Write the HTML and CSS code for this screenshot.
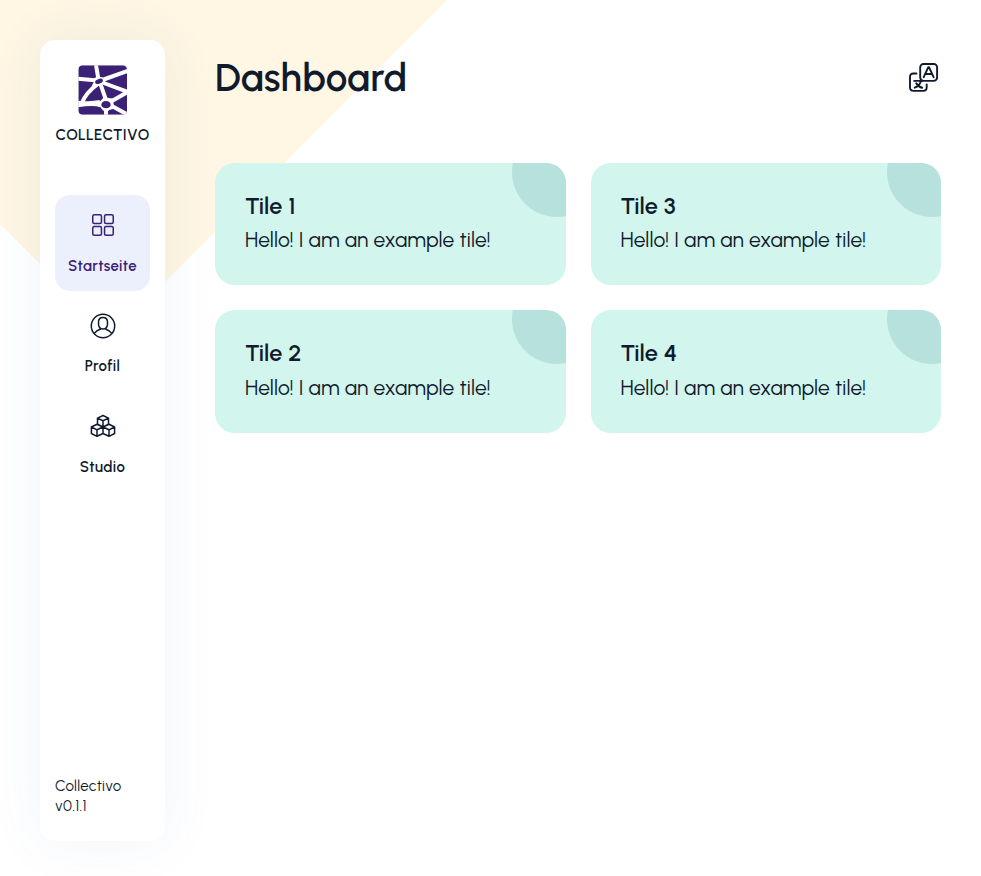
FILE: index.html
```html
<!DOCTYPE html>
<html lang="de">
<head>
<meta charset="utf-8">
<title>Collectivo</title>
<link rel="stylesheet" href="styles.css">
</head>
<body>
<svg class="backdrop" width="447" height="336" viewBox="0 0 447 336" aria-hidden="true"><path fill="#fff6e3" d="M0 0H447L111.500 335.500 0 224Z"/></svg>
<div class="layout">
  <aside class="sidebar">
    <div class="brand">
      <svg class="logo" viewBox="25 25 147 150">
        <defs><clipPath id="logo-shape"><rect x="26" y="26" width="146" height="148" rx="13"/></clipPath></defs>
        <g clip-path="url(#logo-shape)">
          <path fill="#3a2175" d="M26 26h146v148H26z"/>
          <g fill="none" stroke="#fff" stroke-width="12">
            <path d="M79 25 86 66M24 66 76 71M98 70 174 43M102 79 174 106M82 84Q49 108 36 140M93 84 109 130M128 132 174 106M24 138Q65 142 91 136M24 146Q72 138 94 146M109 158V176M128 149 174 174"/>
          </g>
          <path fill="#fff" d="M74 64Q91 55 106 67 111 80 93 86L74 92 66 88Q75 75 74 64ZM86 139 103 122Q120 124 132 126 129 143 137 155L119 160 109 168 98 159Q91 151 86 139Z"/>
          <ellipse cx="88" cy="74" rx="12" ry="7" fill="#3a2175" transform="rotate(-20 88 74)"/>
          <ellipse cx="109" cy="144" rx="14" ry="11" fill="#3a2175"/>
        </g>
      </svg>
      <span class="brand-name">COLLECTIVO</span>
    </div>
    <nav class="menu">
      <a class="item active">
        <svg class="icon" viewBox="0 0 26 26"><g fill="none" stroke="currentColor" stroke-width="1.500"><rect x="2.750" y="2.750" width="8.700" height="8.700" rx="1.500"/><rect x="14.550" y="2.750" width="8.700" height="8.700" rx="1.500"/><rect x="2.750" y="14.550" width="8.700" height="8.700" rx="1.500"/><rect x="14.550" y="14.550" width="8.700" height="8.700" rx="1.500"/></g></svg>
        <span class="start">Startseite</span>
      </a>
      <a class="item">
        <svg class="icon" viewBox="0 0 26 26"><g fill="none" stroke="currentColor" stroke-width="1.500"><circle cx="13" cy="13" r="11.700"/><path d="M13 4.400c-3 0-4.500 1.800-4.500 4.700v2c0 3 1.700 4.900 4.500 4.900s4.500-1.900 4.500-4.900v-2c0-2.900-1.500-4.700-4.500-4.700ZM4.200 20.400c2-2.600 4-3.500 6.800-4.600M21.800 20.400c-2-2.600-4-3.500-6.800-4.600"/></g></svg>
        <span class="profile">Profil</span>
      </a>
      <a class="item">
        <svg class="icon" viewBox="0 0 26 26"><g fill="none" stroke="currentColor" stroke-width="1.500" stroke-linejoin="round"><path d="m13 2.500 5.500 2.600v6L13 13.800l-5.500-2.700v-6ZM7.500 5.100 13 7.700l5.500-2.600M13 7.700v6.100M7 11.300l6 2.700v6.500l-6 2.800-5.600-2.800V14ZM1.400 14 7 16.800l6-2.800M7 16.800v6.500M19 11.300l5.600 2.700v6.500L19 23.300l-6-2.800V14ZM13 14l6 2.800 5.600-2.800M19 16.800v6.500"/></g></svg>
        <span class="studio">Studio</span>
      </a>
    </nav>
    <footer class="version"><span class="product">Collectivo</span><span class="number">v0.1.1</span></footer>
  </aside>
  <main class="content">
    <header class="header">
      <h1>Dashboard</h1>
      <svg class="language" viewBox="0 0 30 30"><g fill="none" stroke="currentColor" stroke-width="1.900" stroke-linecap="round" stroke-linejoin="round"><rect x="11.200" y=".95" width="16.900" height="16.900" rx="3.400"/><path d="m14.700 14.200 4.600-10.100h.7l4.600 10.100M16.300 11h6.700M7.500 10.500H4.600Q1 10.500 1 14.100v10.200q0 3.600 3.600 3.600h9.500q3.600 0 3.600-3.600v-2.800M5.200 17.900h8M11.900 18.200c-.9 3-3.200 5.300-6.200 6.500M7.200 20.200c1.400 2.400 3.300 4 6 4.600"/></g></svg>
    </header>
    <section class="tiles">
      <article class="tile"><h2>Tile 1</h2><p>Hello! I am an example tile!</p></article>
      <article class="tile"><h2>Tile 3</h2><p>Hello! I am an example tile!</p></article>
      <article class="tile"><h2>Tile 2</h2><p>Hello! I am an example tile!</p></article>
      <article class="tile"><h2>Tile 4</h2><p>Hello! I am an example tile!</p></article>
    </section>
  </main>
</div>
</body>
</html>
```
FILE: styles.css
```css
* { box-sizing: border-box; }
body { margin: 0; color: #0f1b2d; background: #fff; font-family: Urbanist, Lato, "Liberation Sans", sans-serif; overflow: hidden; }
.backdrop { position: absolute; left: 0; top: 0; }
.layout { position: relative; display: flex; gap: 50px; height: 876px; padding: 40px 40px 35px; }
.sidebar { display: flex; flex-direction: column; width: 125px; flex: none; padding: 25px 15px; border-radius: 15px; background: #fff; box-shadow: 0 0 55px rgba(50, 105, 175, .075); }
.brand { display: flex; flex-direction: column; align-items: center; height: 130px; }
.logo { display: block; width: 49px; height: 50px; }
.brand-name { margin-top: 10px; font-size: 15px; line-height: 20px; font-weight: 600; letter-spacing: .300px; white-space: nowrap; }
.menu { display: flex; flex-direction: column; gap: 5px; }
.item { display: flex; flex-direction: column; align-items: center; height: 95.600px; padding-top: 17px; border-radius: 15px; font-size: 15px; line-height: 20px; font-weight: 600; letter-spacing: .375px; }
.item.active { color: #3a2175; background: #ecf0fd; }
.icon { display: block; width: 26px; height: 26px; margin-bottom: 17.800px; }
.version { display: flex; flex-direction: column; margin-top: auto; font-size: 15px; line-height: 20px; letter-spacing: .300px; }
.content { flex: 1; min-width: 0; }
.header { display: flex; align-items: center; justify-content: space-between; height: 76px; margin-bottom: 46.800px; padding-right: 2px; }
h1 { margin: 0; font-size: 38.500px; line-height: 48px; font-weight: 600; letter-spacing: .250px; }
.language { display: block; width: 30px; height: 30px; }
.tiles { display: grid; grid-template-columns: 1fr 1fr; gap: 25px; }
.tile { position: relative; overflow: hidden; height: 122.500px; padding: 29px 30px; border-radius: 20px; background: #d2f5ed; }
.tile::after { content: ""; position: absolute; top: -36px; right: -36px; width: 89.800px; height: 89.800px; border-radius: 50%; background: #b7e1dc; }
h2 { margin: 0 0 3.500px; font-size: 23.500px; line-height: 29px; font-weight: 600; letter-spacing: .100px; }
p { margin: 0; font-size: 21px; line-height: 31px; font-weight: 400; letter-spacing: .090px; white-space: nowrap; }
```
